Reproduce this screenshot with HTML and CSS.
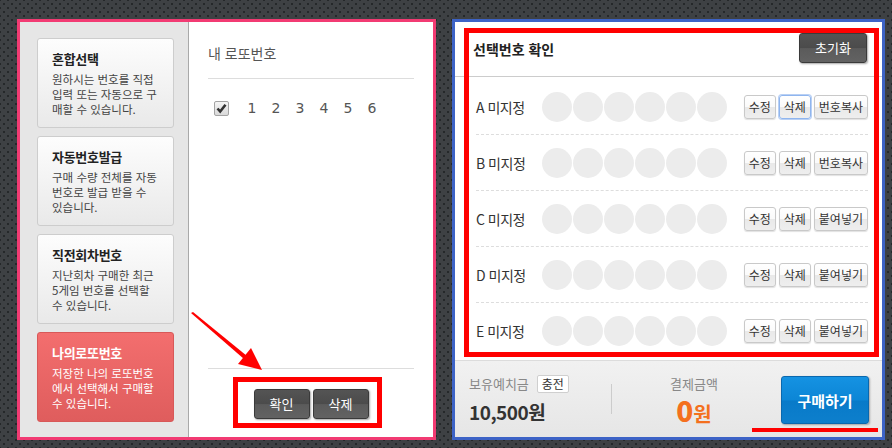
FILE: index.html
```html
<!DOCTYPE html>
<html lang="ko">
<head>
    <meta charset="UTF-8">
    <meta name="viewport" content="width=device-width, initial-scale=1.0">
    <title>로또 구매</title>
    <link rel="stylesheet" href="styles.css">
</head>
<body>

<div class="page">
    <!-- 왼쪽: 번호 선택 방식 -->
    <div class="panel panel-my">
        <ul class="menu">
            <li class="menu-item">
                <strong>혼합선택</strong>
                <p>원하시는 번호를 직접<br>입력 또는 자동으로 구<br>매할 수 있습니다.</p>
            </li>
            <li class="menu-item">
                <strong>자동번호발급</strong>
                <p>구매 수량 전체를 자동<br>번호로 발급 받을 수<br>있습니다.</p>
            </li>
            <li class="menu-item">
                <strong>직전회차번호</strong>
                <p>지난회차 구매한 최근<br>5게임 번호를 선택할<br>수 있습니다.</p>
            </li>
            <li class="menu-item active">
                <strong>나의로또번호</strong>
                <p>저장한 나의 로또번호<br>에서 선택해서 구매할<br>수 있습니다.</p>
            </li>
        </ul>

        <div class="my-list">
            <h2 class="my-head">내 로또번호</h2>
            <div class="my-row">
                <span class="check">
                    <svg viewBox="0 0 15 15" width="15" height="15"><path d="M3.5 7.5 L6.2 10.5 L11.5 3.8" fill="none" stroke="#333" stroke-width="2.6"/></svg>
                </span>
                <span class="num">1</span>
                <span class="num">2</span>
                <span class="num">3</span>
                <span class="num">4</span>
                <span class="num">5</span>
                <span class="num">6</span>
            </div>
            <div class="my-actions">
                <button class="btn-dark">확인</button>
                <button class="btn-dark">삭제</button>
            </div>
        </div>

        <span class="mark mark-actions"></span>
    </div>

    <!-- 오른쪽: 선택번호 확인 -->
    <div class="panel panel-select">
        <div class="sel-head">
            <h2>선택번호 확인</h2>
            <button class="btn-dark btn-reset">초기화</button>
        </div>

        <ul class="slots">
            <li class="slot">
                <span class="slot-name">A 미지정</span>
                <span class="balls"><i></i><i></i><i></i><i></i><i></i><i></i></span>
                <span class="slot-btns"><button>수정</button><button class="focus">삭제</button><button>번호복사</button></span>
            </li>
            <li class="slot">
                <span class="slot-name">B 미지정</span>
                <span class="balls"><i></i><i></i><i></i><i></i><i></i><i></i></span>
                <span class="slot-btns"><button>수정</button><button>삭제</button><button>번호복사</button></span>
            </li>
            <li class="slot">
                <span class="slot-name">C 미지정</span>
                <span class="balls"><i></i><i></i><i></i><i></i><i></i><i></i></span>
                <span class="slot-btns"><button>수정</button><button>삭제</button><button>붙여넣기</button></span>
            </li>
            <li class="slot">
                <span class="slot-name">D 미지정</span>
                <span class="balls"><i></i><i></i><i></i><i></i><i></i><i></i></span>
                <span class="slot-btns"><button>수정</button><button>삭제</button><button>붙여넣기</button></span>
            </li>
            <li class="slot">
                <span class="slot-name">E 미지정</span>
                <span class="balls"><i></i><i></i><i></i><i></i><i></i><i></i></span>
                <span class="slot-btns"><button>수정</button><button>삭제</button><button>붙여넣기</button></span>
            </li>
        </ul>

        <div class="pay">
            <div class="deposit">
                <div class="deposit-label">보유예치금 <button class="btn-charge">충전</button></div>
                <div class="deposit-amount">10,500원</div>
            </div>
            <span class="pay-divider"></span>
            <div class="total">
                <div class="total-label">결제금액</div>
                <div class="total-amount"><b>0</b>원</div>
            </div>
            <button class="btn-buy">구매하기</button>
        </div>

        <span class="mark mark-slots"></span>
        <span class="mark-line"></span>
    </div>
</div>

<svg class="arrow" width="892" height="448" viewBox="0 0 892 448">
    <polygon points="191,313 193,312 247,356 244,359" fill="#f00"/>
    <polygon points="262,370 238,364 251,348" fill="#f00"/>
</svg>

</body>
</html>
```

FILE: styles.css
```css
body {
    margin: 0;
    width: 892px;
    height: 448px;
    overflow: hidden;
    position: relative;
    font-family: "Noto Sans CJK KR", "Noto Sans", sans-serif;
    color: #333;
    background-color: #3e4144;
    background-image:
        radial-gradient(circle, #25282a 0.9px, transparent 1.4px),
        radial-gradient(circle, #25282a 0.9px, transparent 1.4px);
    background-size: 8px 8px, 8px 8px;
    background-position: 0 0, 4px 4px;
}
ul {
    margin: 0;
    padding: 0;
    list-style: none;
}
button {
    font-family: inherit;
    cursor: pointer;
}
.page {
    display: flex;
    gap: 16px;
    padding: 19px 0 0 17px;
}
.panel {
    position: relative;
    box-sizing: border-box;
    height: 421px;
    display: flex;
}

/* 왼쪽 패널 */
.panel-my {
    width: 419px;
    border: 3px solid #f23b73;
    background: #fff;
}
.menu {
    width: 151px;
    padding: 16px 0 0 17px;
    background: #e6e6e6;
    border-right: 1px solid #a9a9a9;
    display: flex;
    flex-direction: column;
    gap: 8px;
}
.menu-item {
    box-sizing: border-box;
    width: 137px;
    height: 90px;
    padding: 11px 4px 0 14px;
    border: 1px solid #cdcdcd;
    border-radius: 3px;
    background: linear-gradient(#fdfdfd, #e9e9e9);
}
.menu-item strong {
    display: block;
    font-size: 13px;
    line-height: 18px;
    color: #222;
    letter-spacing: -0.3px;
}
.menu-item p {
    margin: 4px 0 0;
    font-size: 11.5px;
    line-height: 15px;
    color: #444;
    white-space: nowrap;
}
.menu-item.active {
    border-color: #d85858;
    background: linear-gradient(#f36e6e, #df5d5d);
}
.menu-item.active strong,
.menu-item.active p {
    color: #fff;
}

.my-list {
    flex: 1;
    display: flex;
    flex-direction: column;
    padding: 0 19px;
}
.my-head {
    margin: 0;
    padding: 21px 0 15px;
    font-size: 14px;
    line-height: 20px;
    font-weight: normal;
    color: #555;
    border-bottom: 1px solid #ddd;
}
.my-row {
    display: flex;
    align-items: center;
    margin-top: 19px;
    padding-left: 6px;
    height: 20px;
}
.check {
    box-sizing: border-box;
    width: 15px;
    height: 15px;
    border: 1px solid #a3a3a3;
    border-radius: 2px;
    background: linear-gradient(#f5f5f5, #d9d9d9);
    display: flex;
    align-items: center;
    justify-content: center;
    margin-right: 11px;
}
.check svg {
    display: block;
    margin: -1px;
}
.num {
    width: 24px;
    text-align: center;
    font-family: "DejaVu Sans", sans-serif;
    font-size: 14px;
    color: #555;
}
.my-actions {
    margin-top: auto;
    border-top: 1px solid #ddd;
    padding: 20px 0 18px;
    display: flex;
    justify-content: center;
    gap: 3px;
}
.btn-dark {
    height: 30px;
    padding: 0 14px;
    border: 1px solid #3a3a3a;
    border-radius: 3px;
    background: linear-gradient(#545454, #4b4b4b 50%, #5b5b5b 52%, #626262);
    box-shadow: 1px 1px 2px rgba(0, 0, 0, 0.35);
    color: #fff;
    font-size: 13px;
    line-height: 28px;
}
.my-actions .btn-dark {
    width: 56px;
    padding: 0;
}

/* 오른쪽 패널 */
.panel-select {
    width: 433px;
    border: 3px solid #3d63c6;
    background: #fff;
    flex-direction: column;
}
.sel-head {
    height: 54px;
    padding: 0 15px 0 18px;
    display: flex;
    align-items: center;
    justify-content: space-between;
    border-bottom: 1px solid #ccc;
}
.sel-head h2 {
    margin: 0;
    font-size: 14px;
    line-height: 20px;
    color: #222;
}
.btn-reset {
    width: 68px;
    padding: 0;
    margin-top: -2px;
}
.slots {
    padding: 2px 14px 2px 21px;
}
.slot {
    height: 55px;
    display: flex;
    align-items: center;
    border-bottom: 1px dashed #ddd;
}
.slot:last-child {
    border-bottom: none;
}
.slot-name {
    width: 66px;
    font-size: 14px;
    letter-spacing: -0.5px;
    color: #333;
}
.balls {
    display: flex;
    gap: 1px;
}
.balls i {
    width: 30px;
    height: 30px;
    border-radius: 50%;
    background: #ececec;
}
.slot-btns {
    margin-left: auto;
    display: flex;
    gap: 3px;
}
.slot-btns button {
    height: 24px;
    padding: 0 4px;
    border: 1px solid #c9c9c9;
    border-radius: 3px;
    background: linear-gradient(#fff, #fafafa 50%, #e9e9e9 52%, #eee);
    box-shadow: 0 1px 1px rgba(0, 0, 0, 0.12);
    font-size: 12px;
    color: #333;
}
.slot-btns button.focus {
    border-color: #8fb5ee;
    box-shadow: 0 0 0 1px #b9d0f4;
}

.pay {
    flex: 1;
    display: flex;
    align-items: flex-start;
    padding: 0 13px 0 14px;
    border-top: 1px solid #dcdcdc;
    background: linear-gradient(#f1f1f1, #e6e6e6);
}
.deposit {
    width: 142px;
    padding-top: 14px;
}
.deposit-label {
    font-size: 13px;
    line-height: 18px;
    color: #888;
    display: flex;
    align-items: center;
    gap: 8px;
}
.btn-charge {
    height: 18px;
    padding: 0 4px;
    border: 1px solid #cfcfcf;
    border-radius: 2px;
    background: #fff;
    font-size: 12px;
    line-height: 16px;
    color: #333;
}
.deposit-amount {
    margin-top: 8px;
    font-size: 19px;
    font-weight: bold;
    line-height: 22px;
    color: #333;
    letter-spacing: -0.5px;
}
.pay-divider {
    width: 1px;
    height: 30px;
    margin-top: 23px;
    background: #ccc;
}
.total {
    width: 100px;
    margin-left: 32px;
    padding-top: 14px;
    text-align: center;
}
.total-label {
    font-size: 13px;
    line-height: 18px;
    color: #888;
}
.total-amount {
    margin-top: 3px;
    font-size: 20px;
    font-weight: bold;
    line-height: 28px;
    color: #f4701e;
}
.total-amount b {
    font-size: 28px;
}
.btn-buy {
    margin: 15px 0 0 auto;
    width: 88px;
    height: 48px;
    border: 1px solid #0a68ae;
    border-radius: 3px;
    background: linear-gradient(#1592e2, #0c86d6 50%, #087ac9 52%, #0d7fcc);
    box-shadow: 1px 1px 2px rgba(0, 0, 0, 0.3);
    color: #fff;
    font-size: 15px;
    font-weight: bold;
}

/* 빨간 표시 */
.mark {
    position: absolute;
    box-sizing: border-box;
    border: 5px solid #f00;
    pointer-events: none;
}
.mark-actions {
    left: 213px;
    top: 355px;
    width: 149px;
    height: 51px;
}
.mark-slots {
    left: 9px;
    top: 6px;
    width: 415px;
    height: 329px;
}
.mark-line {
    position: absolute;
    left: 297px;
    top: 406px;
    width: 126px;
    height: 4px;
    background: #f00;
}
.arrow {
    position: absolute;
    left: 0;
    top: 0;
    pointer-events: none;
}
```
